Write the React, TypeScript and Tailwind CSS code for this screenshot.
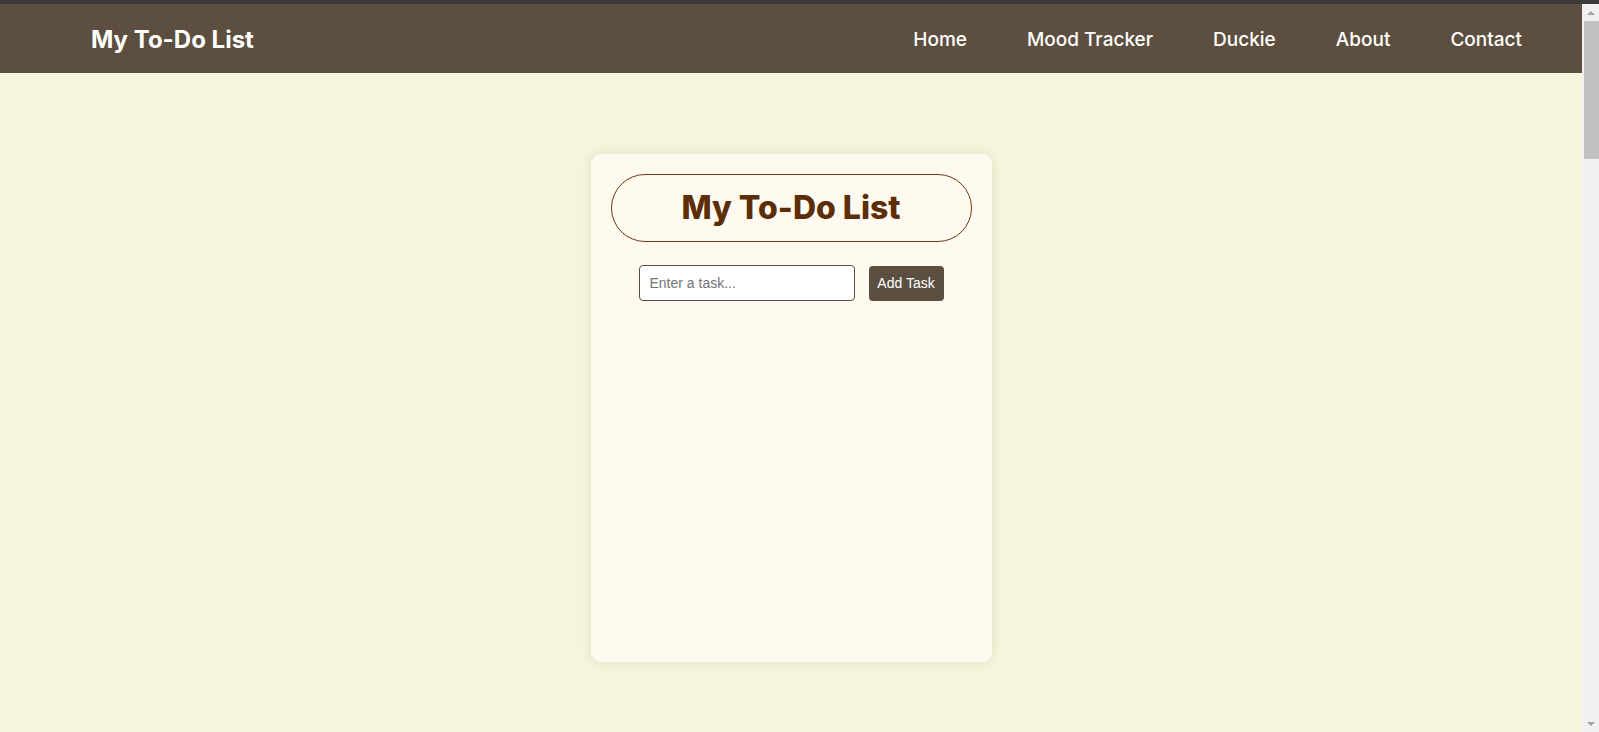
import React, { useState } from "react";

const links = ["Home", "Mood Tracker", "Duckie", "About", "Contact"];

const Navbar = () => {
    return (
        <nav className="flex h-[69px] shrink-0 items-center justify-between bg-[#5c4f40] pl-[91px] pr-[60px] pt-[3px]">
            <h1 className="text-[24px] font-bold text-white">My To-Do List</h1>
            <ul className="flex items-center gap-[60px]">
                {links.map((link) => (
                    <li key={link}>
                        <a href="#" className="text-[19px] font-medium text-white">
                            {link}
                        </a>
                    </li>
                ))}
            </ul>
        </nav>
    );
};

const TodoCard = () => {
    const [task, setTask] = useState("");
    const [tasks, setTasks] = useState<string[]>([]);

    const addTask = () => {
        if (!task.trim()) return;
        setTasks([...tasks, task.trim()]);
        setTask("");
    };

    return (
        <div className="h-[508px] w-[401px] rounded-[10px] bg-[#fffaf0] p-5 shadow-[0_0_12px_rgba(120,110,60,0.15)]">
            <div className="flex h-[68px] items-center justify-center rounded-[34px] border border-[#6b3a12]">
                <h2 className="text-[32px] font-extrabold text-[#5c2d06]">My To-Do List</h2>
            </div>

            <div className="mt-[23px] flex items-center justify-center gap-[14px] font-['Liberation_Sans',Arial,sans-serif]">
                <input
                    value={task}
                    onChange={(e) => setTask(e.target.value)}
                    placeholder="Enter a task..."
                    className="h-[36px] w-[216px] rounded-[4px] border border-[#5c4f40] bg-white px-[10px] text-[14px] text-[#333] outline-none placeholder:text-[#757575]"
                />
                <button
                    onClick={addTask}
                    className="h-[35px] w-[75px] rounded-[4px] bg-[#5c4f40] text-[14px] text-white"
                >
                    Add Task
                </button>
            </div>

            <ul className="mt-4 flex flex-col gap-2">
                {tasks.map((t, i) => (
                    <li key={i} className="text-[14px] text-[#5c2d06]">{t}</li>
                ))}
            </ul>
        </div>
    );
};

// fake window scrollbar, as seen in the screenshot
const Scrollbar = () => {
    return (
        <div className="flex w-[17px] shrink-0 flex-col items-center bg-[#f1f1f1]">
            <div className="flex h-[17px] w-full items-center justify-center">
                <div className="h-0 w-0 border-x-[4px] border-b-[4px] border-x-transparent border-b-[#a3a3a3]" />
            </div>
            <div className="ml-[2px] h-[138px] w-[15px] bg-[#c1c1c1]" />
            <div className="flex-1" />
            <div className="flex h-[17px] w-full items-center justify-center">
                <div className="h-0 w-0 border-x-[4px] border-t-[4px] border-x-transparent border-t-[#a3a3a3]" />
            </div>
        </div>
    );
};

export default function App() {
    return (
        <div className="flex h-screen flex-col overflow-hidden bg-[#f5f5dc] font-['Inter',sans-serif]">
            <div className="h-[4px] shrink-0 bg-[#3a3a3a]" />
            <div className="flex min-h-0 flex-1">
                <div className="flex min-w-0 flex-1 flex-col">
                    <Navbar />
                    <main className="flex justify-center pt-[81px]">
                        <TodoCard />
                    </main>
                </div>
                <Scrollbar />
            </div>
        </div>
    );
}
